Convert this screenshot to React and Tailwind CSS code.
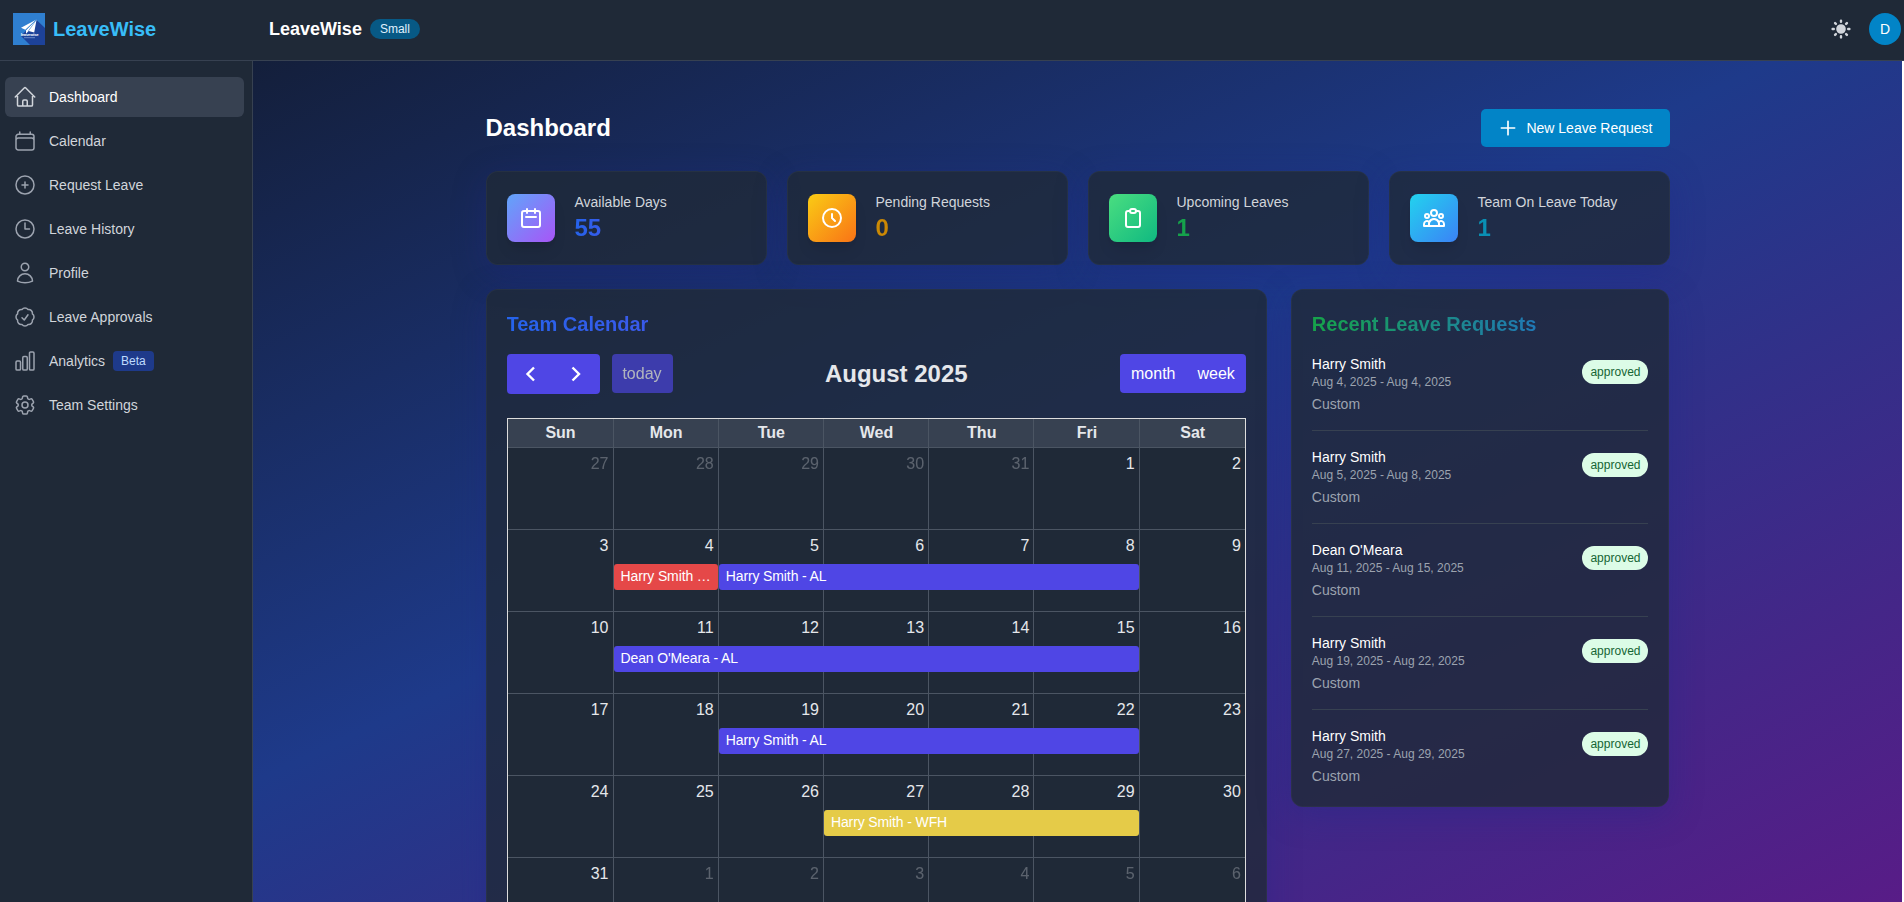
import {
    HiOutlineHome,
    HiOutlineCalendar,
    HiOutlinePlusCircle,
    HiOutlineClock,
    HiOutlineUser,
    HiOutlineCheckBadge,
    HiOutlineChartBar,
    HiOutlineCog6Tooth,
} from "react-icons/hi2";
import {
    HiSun,
    HiOutlinePlus,
    HiOutlineCalendar as CalendarIcon,
    HiOutlineClock as ClockIcon,
    HiOutlineClipboard as ClipboardIcon,
    HiOutlineUserGroup as TeamIcon,
} from "react-icons/hi";

const navigation = [
    { name: "Dashboard", icon: HiOutlineHome, current: true },
    { name: "Calendar", icon: HiOutlineCalendar },
    { name: "Request Leave", icon: HiOutlinePlusCircle },
    { name: "Leave History", icon: HiOutlineClock },
    { name: "Profile", icon: HiOutlineUser },
    { name: "Leave Approvals", icon: HiOutlineCheckBadge },
    { name: "Analytics", icon: HiOutlineChartBar, badge: "Beta" },
    { name: "Team Settings", icon: HiOutlineCog6Tooth },
];

const stats = [
    {
        label: "Available Days",
        value: 55,
        icon: CalendarIcon,
        iconBg: "from-[#60a5fa] to-[#a855f7]",
        valueColor: "from-[#2563eb] to-[#9333ea]",
    },
    {
        label: "Pending Requests",
        value: 0,
        icon: ClockIcon,
        iconBg: "from-[#facc15] to-[#f97316]",
        valueColor: "from-[#ca8a04] to-[#ea580c]",
    },
    {
        label: "Upcoming Leaves",
        value: 1,
        icon: ClipboardIcon,
        iconBg: "from-[#4ade80] to-[#10b981]",
        valueColor: "from-[#16a34a] to-[#059669]",
    },
    {
        label: "Team On Leave Today",
        value: 1,
        icon: TeamIcon,
        iconBg: "from-[#22d3ee] to-[#3b82f6]",
        valueColor: "from-[#0891b2] to-[#2563eb]",
    },
];

const weekDays = ["Sun", "Mon", "Tue", "Wed", "Thu", "Fri", "Sat"];

// out: days that belong to the previous or next month
const weeks = [
    { days: [27, 28, 29, 30, 31, 1, 2], out: [0, 1, 2, 3, 4], events: [] },
    {
        days: [3, 4, 5, 6, 7, 8, 9],
        out: [],
        events: [
            { title: "Harry Smith …", span: "col-start-2 col-span-1", color: "bg-[#e54848]" },
            { title: "Harry Smith - AL", span: "col-start-3 col-span-4", color: "bg-[#4f46e5]" },
        ],
    },
    {
        days: [10, 11, 12, 13, 14, 15, 16],
        out: [],
        events: [{ title: "Dean O'Meara - AL", span: "col-start-2 col-span-5", color: "bg-[#4f46e5]" }],
    },
    {
        days: [17, 18, 19, 20, 21, 22, 23],
        out: [],
        events: [{ title: "Harry Smith - AL", span: "col-start-3 col-span-4", color: "bg-[#4f46e5]" }],
    },
    {
        days: [24, 25, 26, 27, 28, 29, 30],
        out: [],
        events: [{ title: "Harry Smith - WFH", span: "col-start-4 col-span-3", color: "bg-[#e5cb48]" }],
    },
    { days: [31, 1, 2, 3, 4, 5, 6], out: [1, 2, 3, 4, 5, 6], events: [] },
];

const requests = [
    { name: "Harry Smith", dates: "Aug 4, 2025 - Aug 4, 2025" },
    { name: "Harry Smith", dates: "Aug 5, 2025 - Aug 8, 2025" },
    { name: "Dean O'Meara", dates: "Aug 11, 2025 - Aug 15, 2025" },
    { name: "Harry Smith", dates: "Aug 19, 2025 - Aug 22, 2025" },
    { name: "Harry Smith", dates: "Aug 27, 2025 - Aug 29, 2025" },
];

const cardClass =
    "rounded-xl border border-[#374151]/30 bg-[#1f2937]/80 p-5 shadow-[0_8px_32px_0_rgba(31,38,135,0.37)]";

function Logo() {
    return (
        <svg className="h-8 w-8" viewBox="0 0 32 32">
            <rect width="32" height="32" fill="#2f7fd0" />
            <path d="M23.300 6.700L32 15v17H17L8 23z" fill="#1d4299" />
            <path d="M23.600 6.500L8 14.800l4.300 1.900z" fill="#fff" />
            <path d="M23.600 6.500L13 17.200v3.600l2.600-2.700 5.600 1.400z" fill="#fff" />
            <path d="M23.600 6.500L12.600 17M23.600 6.500L15.400 18" stroke="#2f7fd0" strokeWidth="0.6" fill="none" />
            <text x="16.700" y="23" textAnchor="middle" fontSize="4.200" fontWeight="700" fill="#fff" textLength="18">
                leavewise
            </text>
            <path d="M11 24.700h11" stroke="#9db9e6" strokeWidth="0.6" />
        </svg>
    );
}

function Header() {
    return (
        <header className="-mr-0.5 flex h-[61px] items-center justify-between border-b border-[#374151] bg-[#1f2937] pr-[3px] pb-0.5 pl-[13px]">
            <div className="flex items-center">
                <div className="flex w-[256px] items-center gap-2">
                    <Logo />
                    <span className="text-xl font-bold text-[#38bdf8]">LeaveWise</span>
                </div>
                <span className="text-lg font-semibold text-white">LeaveWise</span>
                <span className="ml-2 rounded-full bg-[#075985] px-2.5 py-0.5 text-xs font-medium text-[#e0f2fe]">
                    Small
                </span>
            </div>
            <div className="flex items-center gap-4">
                <button>
                    <HiSun className="h-6 w-6 text-[#d1d5db]" />
                </button>
                <div className="flex h-8 w-8 items-center justify-center rounded-full bg-[#0284c7] text-sm font-medium text-white">
                    D
                </div>
            </div>
        </header>
    );
}

function Sidebar() {
    return (
        <nav className="flex w-[253px] shrink-0 flex-col gap-1 border-r border-[#374151] bg-[#1f2937] pt-4 pr-2 pl-[5px]">
            {navigation.map((item) => (
                <a
                    key={item.name}
                    className={
                        item.current
                            ? "flex h-10 items-center rounded-md bg-[#374151] px-2 text-sm font-medium text-white"
                            : "flex h-10 items-center rounded-md px-2 text-sm font-medium text-[#d1d5db]"
                    }
                >
                    <item.icon
                        className={item.current ? "mr-3 h-6 w-6 text-[#d1d5db]" : "mr-3 h-6 w-6 text-[#9ca3af]"}
                    />
                    {item.name}
                    {item.badge && (
                        <span className="ml-2 rounded bg-[#1e3a8a] px-2 py-0.5 text-xs text-[#bfdbfe]">
                            {item.badge}
                        </span>
                    )}
                </a>
            ))}
        </nav>
    );
}

function Chevron({ d }) {
    return (
        <svg className="h-6 w-6" viewBox="0 0 24 24" fill="none" stroke="currentColor" strokeWidth="2.4">
            <path d={d} />
        </svg>
    );
}

function TeamCalendar() {
    return (
        <div className={`${cardClass} col-span-2`}>
            <h3 className="mb-4 bg-linear-to-r/srgb from-[#2563eb] to-[#9333ea] bg-clip-text text-xl font-bold text-transparent">
                Team Calendar
            </h3>

            <div className="mb-6 flex h-10 items-start justify-between">
                <div className="flex items-start gap-3">
                    <div className="flex h-10 rounded bg-[#4f46e5] text-white">
                        <button className="flex w-[46px] items-center justify-center">
                            <Chevron d="M16 5.500L9.500 12l6.500 6.500" />
                        </button>
                        <button className="flex w-[47px] items-center justify-center">
                            <Chevron d="M8.500 5.500L15 12l-6.500 6.500" />
                        </button>
                    </div>
                    <button className="h-[39px] w-[61px] rounded bg-[#4f46e5] text-base text-white opacity-65" disabled>
                        today
                    </button>
                </div>
                <h2 className="mt-1 text-2xl font-bold text-[#e5e7eb]">August 2025</h2>
                <div className="flex h-[39px] items-center rounded bg-[#4f46e5] text-base text-white">
                    <button className="px-[11px]">month</button>
                    <button className="px-[11px]">week</button>
                </div>
            </div>

            <div className="border border-[#dddddd] bg-[#1f2937] text-base text-[#e5e7eb]">
                <div className="grid grid-cols-[106px_repeat(6,1fr)] bg-[#374151]">
                    {weekDays.map((day) => (
                        <div
                            key={day}
                            className="h-[29px] border-r border-b border-[#4b5563] pt-0.5 pl-px text-center font-bold last:border-r-0"
                        >
                            {day}
                        </div>
                    ))}
                </div>
                {weeks.map((week, i) => (
                    <div key={i} className="grid grid-cols-[106px_repeat(6,1fr)] grid-rows-[34px_48px]">
                        {week.days.map((day, col) => (
                            <div
                                key={col}
                                style={{ gridColumn: col + 1 }}
                                className="row-span-2 row-start-1 border-r border-b border-[#4b5563] px-1 pt-1 text-right last-of-type:border-r-0"
                            >
                                <span className={week.out.includes(col) ? "opacity-30" : ""}>{day}</span>
                            </div>
                        ))}
                        {week.events.map((event) => (
                            <a
                                key={event.title}
                                className={`${event.span} ${event.color} row-start-2 mr-px h-[26px] truncate rounded-[3px] pl-[7px] text-sm leading-[25px] font-medium tracking-[-0.12px] text-white`}
                            >
                                {event.title}
                            </a>
                        ))}
                    </div>
                ))}
            </div>
        </div>
    );
}

function RecentRequests() {
    return (
        <div className={`${cardClass} self-start`}>
            <h3 className="mb-4 bg-linear-to-r/srgb from-[#16a34a] to-[#2563eb] bg-clip-text text-xl font-bold text-transparent">
                Recent Leave Requests
            </h3>
            <ul className="-my-4 divide-y divide-[#374151]">
                {requests.map((request) => (
                    <li key={request.dates} className="py-4">
                        <div className="flex items-center justify-between">
                            <div>
                                <p className="text-sm font-medium text-white">{request.name}</p>
                                <p className="text-xs text-[#9ca3af]">{request.dates}</p>
                            </div>
                            <span className="rounded-full bg-[#dcfce7] px-2 py-1 text-xs font-medium text-[#166534]">
                                approved
                            </span>
                        </div>
                        <p className="mt-1 text-sm text-[#9ca3af]">Custom</p>
                    </li>
                ))}
            </ul>
        </div>
    );
}

export default function App() {
    return (
        <div className="h-screen overflow-hidden bg-white pr-0.5 font-['Liberation_Sans',Arial,sans-serif]">
            <div className="flex h-full flex-col bg-linear-to-br/srgb from-[#111827] via-[#1e3a8a] to-[#581c87]">
                <Header />
                <div className="flex min-h-0 flex-1">
                    <Sidebar />
                    <main className="min-w-0 flex-1 overflow-hidden">
                        <div className="mx-auto max-w-7xl px-12 pt-12">
                            <div className="mb-6 flex items-center justify-between">
                                <h1 className="text-2xl font-bold text-white">Dashboard</h1>
                                <button className="flex items-center rounded-[5px] border border-transparent bg-[#0284c7] px-4 py-2 text-sm font-medium text-white">
                                    <HiOutlinePlus className="mr-2 h-5 w-5" />
                                    New Leave Request
                                </button>
                            </div>

                            <div className="mb-6 grid grid-cols-4 gap-5">
                                {stats.map((stat) => (
                                    <div key={stat.label} className={`${cardClass} flex items-center`}>
                                        <div
                                            className={`${stat.iconBg} flex h-12 w-12 items-center justify-center rounded-lg bg-linear-to-br/srgb shadow-lg`}
                                        >
                                            <stat.icon className="h-6 w-6 text-white" />
                                        </div>
                                        <dl className="ml-5 flex-1">
                                            <dt className="text-sm font-medium text-[#d1d5db]">{stat.label}</dt>
                                            <dd
                                                className={`${stat.valueColor} bg-linear-to-r/srgb bg-clip-text text-2xl font-bold text-transparent`}
                                            >
                                                {stat.value}
                                            </dd>
                                        </dl>
                                    </div>
                                ))}
                            </div>

                            <div className="grid grid-cols-3 gap-6">
                                <TeamCalendar />
                                <RecentRequests />
                            </div>
                        </div>
                    </main>
                </div>
            </div>
        </div>
    );
}
